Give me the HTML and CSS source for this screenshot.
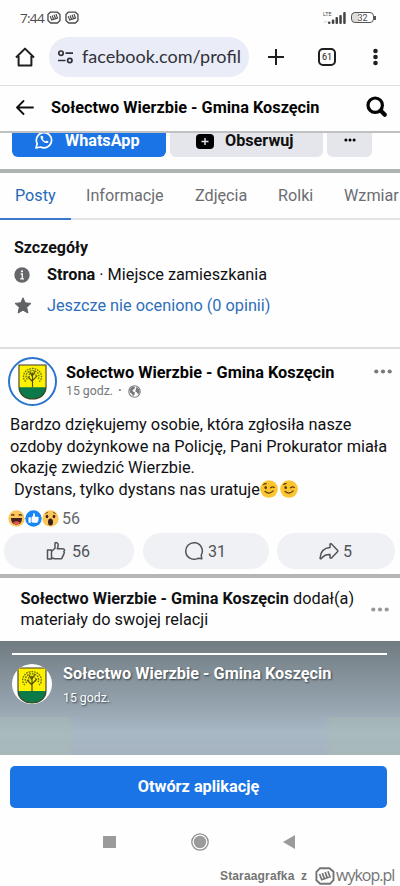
FILE: index.html
```
<!DOCTYPE html>
<html lang="pl">
<head>
<meta charset="utf-8">
<title>Sołectwo Wierzbie - Gmina Koszęcin</title>
<link rel="stylesheet" href="styles.css">
</head>
<body>
<svg class="defs" width="0" height="0">
  <defs>
    <symbol id="wykop" viewBox="0 0 20 18">
      <path d="M5 1.200h9.500l4 3.600v8.400l-3.500 3.600H5.200L1.400 13.200V4.800z" fill="none" stroke="currentColor" stroke-width="1.900" stroke-linejoin="round"/>
      <path d="M4.600 7l2.100 5.700 8.300-2.900-2.100-5.600M7.300 6.100l1.900 5M10.100 5.100l1.900 5" fill="none" stroke="currentColor" stroke-width="1.700"/>
    </symbol>
    <symbol id="crest" viewBox="0 0 30 37" preserveAspectRatio="none">
      <path d="M1 1h28v23c0 7-6 12-14 12S1 31 1 24z" fill="#fff200"/>
      <path d="M1 24h28c0 7-6 12-14 12S1 31 1 24z" fill="#0b7a48"/>
      <path d="M1 1h28v23c0 7-6 12-14 12S1 31 1 24z" fill="none" stroke="#3c3a20" stroke-width="1.100"/>
      <path d="M15 24V9M15 18l-5-5M15 17l5-5M15 13l-3-5M15 12l3-5" stroke="#4f4a10" stroke-width="1.200" fill="none"/>
      <g fill="none" stroke="#6b7714" stroke-width="1.400" stroke-dasharray="1.700 1">
        <path d="M8 18c-3-2-3-7-.5-10C11 3.500 19 3.500 22.500 8c2.500 3 2.500 8-.5 10"/>
        <path d="M9.700 16c-2-2-1.700-5 0-7 2.500-3 8-3 10.600 0 1.700 2 2 5 0 7"/>
        <path d="M12 14c-1.500-2-.5-4.500 3-4.500s4.500 2.500 3 4.500"/>
      </g>
    </symbol>
    <symbol id="wink" viewBox="0 0 18 18">
      <circle cx="9" cy="9" r="8.800" fill="#fcc52f"/>
      <ellipse cx="5.700" cy="7.400" rx="1.300" ry="1.500" fill="#5a3b0c"/>
      <path d="M3.600 4.600q1.200-1.200 2.600-.9M10.600 7.800q1.700-1.600 3.700-.4M5 11.300q4 3.700 8.200-.4" fill="none" stroke="#5a3b0c" stroke-width="1.200" stroke-linecap="round"/>
    </symbol>
  </defs>
</svg>
<main class="screen">
  <div class="status">
    <span class="clock">7:44</span>
    <svg class="w1" width="14" height="13"><use href="#wykop"/></svg>
    <svg class="w2" width="14" height="13"><use href="#wykop"/></svg>
    <div class="lte"><span>LTE</span><span class="arrows">↓↑</span></div>
    <svg class="signal" width="18" height="12" viewBox="0 0 18 12" fill="#444"><rect x="0" y="9.500" width="2.500" height="2.500" rx="1"/><rect x="3.800" y="7.500" width="2.500" height="4.500" rx="1"/><rect x="7.500" y="5" width="2.500" height="7" rx="1"/><rect x="11.300" y="3" width="2.500" height="9" rx="1"/><rect x="15.200" y="0" width="2.500" height="12" rx="1"/></svg>
    <div class="battery"><span>32</span></div><i class="tip"></i>
  </div>

  <div class="browser">
    <svg class="home" width="20" height="20" viewBox="0 0 20 20" fill="none" stroke="#1f1f1f" stroke-width="2"><path d="M1 10.500L10 1.600l9 8.900M3.600 9v9.500h12.800V9" stroke-linejoin="round"/></svg>
    <div class="url">
      <svg width="17" height="14" viewBox="0 0 17 14" fill="none" stroke="#303238" stroke-width="1.700"><circle cx="4" cy="3.200" r="2.200"/><path d="M8.500 3.200H16M1 10.500h7.500"/><circle cx="12.800" cy="10.500" r="2.200"/></svg>
      <span>facebook.com/profil</span>
    </div>
    <svg class="plus" width="16" height="16" viewBox="0 0 16 16"><path d="M8 0v16M0 8h16" stroke="#1f1f1f" stroke-width="2"/></svg>
    <div class="tabcount">61</div>
    <svg class="kebab" width="5" height="18" viewBox="0 0 5 18" fill="#1f1f1f"><circle cx="2.500" cy="3" r="2.300"/><circle cx="2.500" cy="9" r="2.300"/><circle cx="2.500" cy="15" r="2.300"/></svg>
  </div>

  <header class="pagebar">
    <svg width="18" height="15" viewBox="0 0 18 15" fill="none" stroke="#111" stroke-width="1.800" stroke-linecap="round" stroke-linejoin="round"><path d="M17 7.500H1M7.500 1L1 7.500 7.500 14"/></svg>
    <h1>Sołectwo Wierzbie - Gmina Koszęcin</h1>
    <svg class="search" width="22" height="22" viewBox="0 0 22 22" fill="none" stroke="#050505"><circle cx="9.200" cy="9.200" r="7.200" stroke-width="3.200"/><path d="M14.800 14.800l4 4" stroke-width="4.200" stroke-linecap="round"/></svg>
  </header>

  <section class="actions">
    <div class="btn primary">
      <svg width="18" height="18" viewBox="0 0 18 18" fill="none" stroke="#fff"><path d="M1 17l1.200-4.300A7.600 7.600 0 1 1 5.500 16z" stroke-width="1.700" stroke-linejoin="round"/><path d="M6 4.700c-2 2 3.300 8.700 6.600 7.200 1.200-.7 1-1.400.6-1.700l-1.500-.7-1 1c-1.300-.5-2.400-1.500-3-2.800l.8-.9-.8-1.900z" fill="#fff" stroke="none"/></svg>
      <span>WhatsApp</span>
    </div>
    <div class="btn follow">
      <svg width="18" height="18" viewBox="0 0 18 18"><rect x="2" y="0" width="14" height="2" rx="1"/><rect x="0" y="3" width="18" height="15" rx="4"/><path d="M9 7v7M5.500 10.500h7" stroke="#e4e6eb" stroke-width="1.400"/></svg>
      <span>Obserwuj</span>
    </div>
    <div class="btn more"><svg width="12" height="4" viewBox="0 0 12 4"><circle cx="1.900" cy="2" r="1.500"/><circle cx="6" cy="2" r="1.500"/><circle cx="10.100" cy="2" r="1.500"/></svg></div>
  </section>

  <nav class="tabs">
    <a class="active">Posty</a><a class="t2">Informacje</a><a class="t3">Zdjęcia</a><a class="t4">Rolki</a><a class="t5">Wzmiar</a>
  </nav>

  <section class="details">
    <h2>Szczegóły</h2>
    <div class="row info">
      <svg width="16" height="16" viewBox="0 0 16 16"><circle cx="8" cy="8" r="7.700" fill="#65676b"/><path d="M6.700 7h1.600v4.500M6.200 11.800h3.800" stroke="#fff" stroke-width="1.300" fill="none"/><circle cx="8" cy="4.300" r="1.100" fill="#fff"/></svg>
      <span><b>Strona</b> · Miejsce zamieszkania</span>
    </div>
    <div class="row rating">
      <svg width="18" height="17" viewBox="0 0 18 17"><path d="M9 .8l2.200 5 5.800.6-4.300 3.900 1.200 5.700L9 13.200 4.100 16l1.200-5.700L1 6.400l5.800-.6z" fill="#606266" stroke="#606266" stroke-linejoin="round"/></svg>
      <span>Jeszcze nie oceniono (0 opinii)</span>
    </div>
  </section>

  <article class="post">
    <div class="author">
      <div class="avatar ring"><svg width="29" height="36"><use href="#crest"/></svg></div>
      <div class="who">
        <h3>Sołectwo Wierzbie - Gmina Koszęcin</h3>
        <div class="time"><span>15 godz.</span><span class="dot">·</span>
          <svg width="13" height="13" viewBox="0 0 13 13"><circle cx="6.500" cy="6.500" r="5.700" fill="#fff" stroke="#77797d" stroke-width="1.100"/><path d="M1.500 4.500l3-3 2.500.5-.5 2-2 1 .5 1.500 2 1-.5 2-1.500 2-1-2.500-2-1.500zM8.500 2l2.500 2 .8 3-1.800 2.500-1-2-1.700-1 .5-2z" fill="#77797d"/></svg>
        </div>
      </div>
      <svg class="dots" width="18" height="5" viewBox="0 0 18 5" fill="#77797d"><circle cx="2.300" cy="2.500" r="2.100"/><circle cx="9" cy="2.500" r="2.100"/><circle cx="15.700" cy="2.500" r="2.100"/></svg>
    </div>
    <div class="text">
      <p class="l1">Bardzo dziękujemy osobie, która zgłosiła nasze</p>
      <p class="l2">ozdoby dożynkowe na Policję, Pani Prokurator miała</p>
      <p class="l3">okazję zwiedzić Wierzbie.</p>
      <p class="l4">Dystans, tylko dystans nas uratuje<svg width="18" height="18"><use href="#wink"/></svg><svg class="second" width="18" height="18"><use href="#wink"/></svg></p>
    </div>
    <div class="reactions">
      <svg width="17" height="17" viewBox="0 0 17 17"><circle cx="8.500" cy="8.500" r="8.200" fill="#fbc65a"/><path d="M3.300 5.500q1.500-1.800 3 0M10.700 5.500q1.500-1.800 3 0" stroke="#513011" stroke-width="1.200" fill="none"/><path d="M3 8h11c0 4.500-2.300 6.500-5.500 6.500S3 12.500 3 8z" fill="#45201e"/><path d="M5 12.700q3.500-2.800 7 0-3.500 3.500-7 0" fill="#f05256"/></svg>
      <svg width="17" height="17" viewBox="0 0 17 17"><circle cx="8.500" cy="8.500" r="8.200" fill="#1686f4"/><path d="M3.500 7.300h2.300v5.500H3.500zM6.500 7.500l1.700-2V3.300c1.700-.6 2.400 1.300 1.600 3.400h3c1.200 0 1.200 1.400.5 1.700.7.400.4 1.500-.1 1.600.4.600.1 1.400-.5 1.500.1.800-.3 1.300-1 1.300H8.300l-1.800-.5z" fill="#fff"/></svg>
      <svg width="17" height="17" viewBox="0 0 17 17"><circle cx="8.500" cy="8.500" r="8.200" fill="#fbc65a"/><path d="M3.300 3.800q1-1.200 2.500-1.200M11.200 2.600q1.500 0 2.500 1.200" stroke="#6b4315" fill="none"/><ellipse cx="5" cy="6.500" rx="1.300" ry="1.700" fill="#3b211b"/><ellipse cx="12" cy="6.500" rx="1.300" ry="1.700" fill="#3b211b"/><ellipse cx="8.500" cy="12" rx="2.500" ry="3.500" fill="#3b211b"/></svg>
      <span>56</span>
    </div>
    <div class="pills">
      <div class="pill p1"><svg width="20" height="20" viewBox="0 0 20 20" fill="none" stroke="#505359" stroke-width="1.500" stroke-linejoin="round"><path d="M1.500 9h4v9h-4zM5.500 10.500L9 7.300V2.500c0-1.300 3-1.400 3.200 1.200.1 1.600-.5 3-.9 4h5.400c2 0 2.400 2 1.100 2.900.8.9.6 2-.4 2.600.4 1-.1 1.900-1 2.200.2 1.500-.6 2.400-2 2.400H8.500l-3-1.100"/></svg><span>56</span></div>
      <div class="pill p2"><svg width="20" height="20" viewBox="0 0 20 20" fill="none" stroke="#505359" stroke-width="1.500" stroke-linejoin="round"><path d="M17.200 14.200A8.300 8.300 0 1 0 14 17.300l3.800 .5z"/></svg><span>31</span></div>
      <div class="pill p3"><svg width="20" height="17" viewBox="0 0 20 17" fill="none" stroke="#505359" stroke-width="1.500" stroke-linejoin="round"><path d="M11 1.300c.2-.8 1-.8 1.500-.3l6 6.200c.5.600.5 1 0 1.500l-6 6.200c-.6.500-1.500.3-1.500-.5v-3C7 11.200 4.500 12.500 2.300 15.500c-.5.600-1.300.3-1.200-.5C1.600 8.800 5 5 11 4.600z"/></svg><span>5</span></div>
    </div>
  </article>

  <section class="storyhead">
    <div><p class="s1"><b>Sołectwo Wierzbie - Gmina Koszęcin</b> dodał(a)</p><p class="s2">materiały do swojej relacji</p></div>
    <svg width="18" height="5" viewBox="0 0 18 5" fill="#96989b"><circle cx="2.300" cy="2.500" r="2.100"/><circle cx="9" cy="2.500" r="2.100"/><circle cx="15.700" cy="2.500" r="2.100"/></svg>
  </section>

  <section class="story">
    <div class="progress"></div>
    <div class="storyauthor">
      <div class="avatar"><svg width="30" height="37"><use href="#crest"/></svg></div>
      <div><h3>Sołectwo Wierzbie - Gmina Koszęcin</h3><p>15 godz.</p></div>
    </div>
  </section>

  <div class="cta"><span>Otwórz aplikację</span></div>

  <div class="sysnav">
    <i class="square"></i>
    <svg class="circle" width="18" height="18" viewBox="0 0 18 18"><circle cx="9" cy="9" r="8.200" fill="none" stroke="#8f8f8f" stroke-width="1.300"/><circle cx="9" cy="9" r="6.200" fill="#9b9b9b"/></svg>
    <svg width="12" height="14" viewBox="0 0 12 14"><path d="M12 0v14L0 7z" fill="#9b9b9b"/></svg>
  </div>

  <footer class="credit">
    <span class="user">Staraagrafka</span><span class="from">z</span>
    <svg width="20" height="18"><use href="#wykop"/></svg>
    <span class="brand">wykop.pl</span>
  </footer>
</main>
</body>
</html>
```
FILE: styles.css
```
* { box-sizing: border-box; }
body { margin: 0; background: #fff; font-family: Roboto, "Liberation Sans", sans-serif; color: #101113; }
h1, h2, h3, p { margin: 0; font-size: 16.300px; }
svg { display: block; flex: none; }
.defs { position: absolute; }
.screen { width: 400px; height: 886px; overflow: hidden; background: #fefefe; white-space: nowrap; }
b, h1, h2, h3 { font-weight: 700; }

.status { height: 35px; display: flex; align-items: center; padding-left: 20px; color: #4a4a4a; }
.clock { width: 27px; font: 13.500px "Open Sans", sans-serif; letter-spacing: -.7px; }
.w2 { margin-left: 4px; }
.lte { width: 10px; margin-left: 244px; font-size: 5.500px; line-height: 7px; display: flex; flex-direction: column; }
.arrows { font-size: 4px; }
.signal { margin-left: -5px; }
.battery { width: 23px; height: 11px; margin-left: 5px; border: 1.500px solid #555; border-radius: 4px; display: flex; justify-content: center; align-items: center; background: linear-gradient(90deg, #ddd 32%, #fff 32%); font-size: 9px; line-height: 8px; }
.tip { width: 2px; height: 4px; background: #555; }

.browser { height: 51px; display: flex; align-items: center; padding: 0 0 7px 15px; border-bottom: 1px solid #dedede; }
.url { width: 200px; height: 40px; margin-left: 14px; padding-left: 8px; display: flex; align-items: center; border-radius: 20px; background: #eaecf8; color: #303238; font: 18px Lato, sans-serif; }
.url span { margin-left: 8px; padding-bottom: 1px; letter-spacing: 0; }
.plus { margin-left: 19px; }
.tabcount { width: 18px; height: 18px; margin-left: 34px; border: 2px solid #1f1f1f; border-radius: 5px; font-size: 9px; line-height: 14px; text-align: center; }
.kebab { margin-left: 37px; }

.pagebar { height: 47px; display: flex; align-items: center; padding: 0 0 3px 16px; border-bottom: 2px solid #c0c1c2; }
.pagebar h1 { width: 269px; margin-left: 17px; color: #050505; }
.search { margin-left: 46px; }

.actions { height: 40px; display: flex; align-items: flex-start; padding-left: 12px; border-bottom: 4px solid #adb2b3; overflow: hidden; }
.btn { height: 36px; margin-top: -12px; display: flex; align-items: center; border-radius: 6px; background: #e4e6eb; font-size: 16.200px; font-weight: 700; color: #101010; padding-top: 2px; }
.primary { width: 154px; padding-left: 23px; background: #1a74e5; color: #fff; }
.primary span { margin-left: 12px; }
.follow { width: 153px; margin-left: 4px; padding-left: 26px; }
.follow span { margin-left: 11px; }
.more { width: 45px; margin-left: 4px; justify-content: center; }

.tabs { height: 47px; display: flex; border-bottom: 2px solid #e1e3e6; font-size: 16.200px; line-height: 45px; color: #6b6d71; }
.tabs a { flex: none; }
.active { width: 71px; height: 47px; padding-left: 15px; border-bottom: 2px solid #3979c8; color: #2769b8; }
.t2 { width: 109px; padding-left: 15px; }
.t3 { width: 83px; padding-left: 15px; }
.t4 { width: 66px; padding-left: 15px; }
.t5 { padding-left: 15px; }

.details { height: 129px; padding: 18px 0 0 14px; border-bottom: 2px solid #dcddde; }
.details h2 { line-height: 19px; font-size: 16px; }
.row { display: flex; align-items: center; height: 31px; font-size: 16.300px; }
.info { margin-top: 2px; }
.info span { margin-left: 17px; }
.rating { color: #2e6fbb; }
.rating span { margin-left: 15px; }

.post { height: 229px; border-bottom: 4px solid #b4b5b6; }
.author { height: 65px; padding: 8px 0 0 8px; display: flex; align-items: flex-start; }
.avatar { flex: none; display: flex; justify-content: center; align-items: center; border-radius: 50%; background: #fff; }
.ring { width: 49px; height: 49px; border: 2px solid #2c74cf; padding-top: 1px; }
.who { width: 270px; margin: 6px 0 0 9px; }
.who h3 { line-height: 20px; color: #050505; }
.time { display: flex; align-items: center; height: 16px; font-size: 12.300px; color: #74767a; }
.dot { margin: 0 6px 0 5px; font-weight: 700; }
.dots { margin: 12px 0 0 38px; }
.text { padding-left: 10px; color: #101113; }
.text p { height: 21.500px; line-height: 21.500px; font-size: 16.330px; }
.text .l4 { display: flex; align-items: center; padding-left: 4px; }
.text .second { margin-left: 2px; }
.reactions { height: 21px; margin-top: 8px; display: flex; align-items: center; padding-left: 8px; color: #65676b; font-size: 16px; }
.reactions span { margin-left: 3px; }
.pills { display: flex; margin-top: 4px; padding-left: 4px; color: #505359; font-size: 16px; }
.pill { height: 36px; display: flex; align-items: center; border-radius: 18px; background: #f0f1f4; }
.p1 { width: 130px; padding-left: 42px; }
.p1 span { margin-left: 6px; }
.p2 { width: 126px; margin-left: 9px; padding-left: 41px; }
.p2 span { margin-left: 4px; }
.p3 { width: 118px; margin-left: 8px; padding-left: 42px; }
.p3 span { margin-left: 4px; }

.storyhead { height: 63px; display: flex; align-items: center; padding: 0 0 1px 20.500px; }
.storyhead div { width: 350px; }
.storyhead p { line-height: 21.500px; }

.story { height: 114px; padding: 12px 0 0 12px; background: linear-gradient(90deg, rgba(170,190,178,.4) 0 66px, transparent 74px 322px, rgba(170,190,178,.4) 334px) 0 100% / 100% 38px no-repeat, linear-gradient(#707b80, #84919a 30%, #98a6b1 60%, #a8b8c5 80%, #a5b3bf); }
.progress { width: 375px; height: 2px; background: #fff; }
.storyauthor { display: flex; margin-top: 9px; color: #fff; text-shadow: 1px 1px 2px #34424b; }
.story .avatar { width: 40px; height: 40px; margin: 0 1px 0 0; overflow: hidden; padding-top: 2px; }
.storyauthor > div + div { margin-left: 10px; }
.storyauthor h3 { line-height: 20px; }
.storyauthor p { margin-top: 5px; font-size: 12.300px; line-height: 18px; }

.cta { height: 63px; padding: 11px 13px 10px 10px; }
.cta span { display: block; height: 42px; border-radius: 5px; background: #1b74e6; color: #fff; font-size: 16.300px; font-weight: 700; line-height: 41px; text-align: center; }

.sysnav { height: 46px; display: flex; align-items: center; padding: 2px 0 0 103px; }
.square { width: 13px; height: 12px; background: #9b9b9b; }
.circle { margin: 0 74px 0 75px; }

.credit { height: 22px; display: flex; align-items: center; padding: 2px 0 0 220px; color: #747474; }
.user { width: 75px; font: 700 12px "Liberation Sans", sans-serif; letter-spacing: .15px; }
.from { margin: 0 8px 0 6px; font: 700 12px "Liberation Sans", sans-serif; }
.brand { margin: -3px 0 0 1px; font: 16px "Open Sans", sans-serif; letter-spacing: -1px; }
```
